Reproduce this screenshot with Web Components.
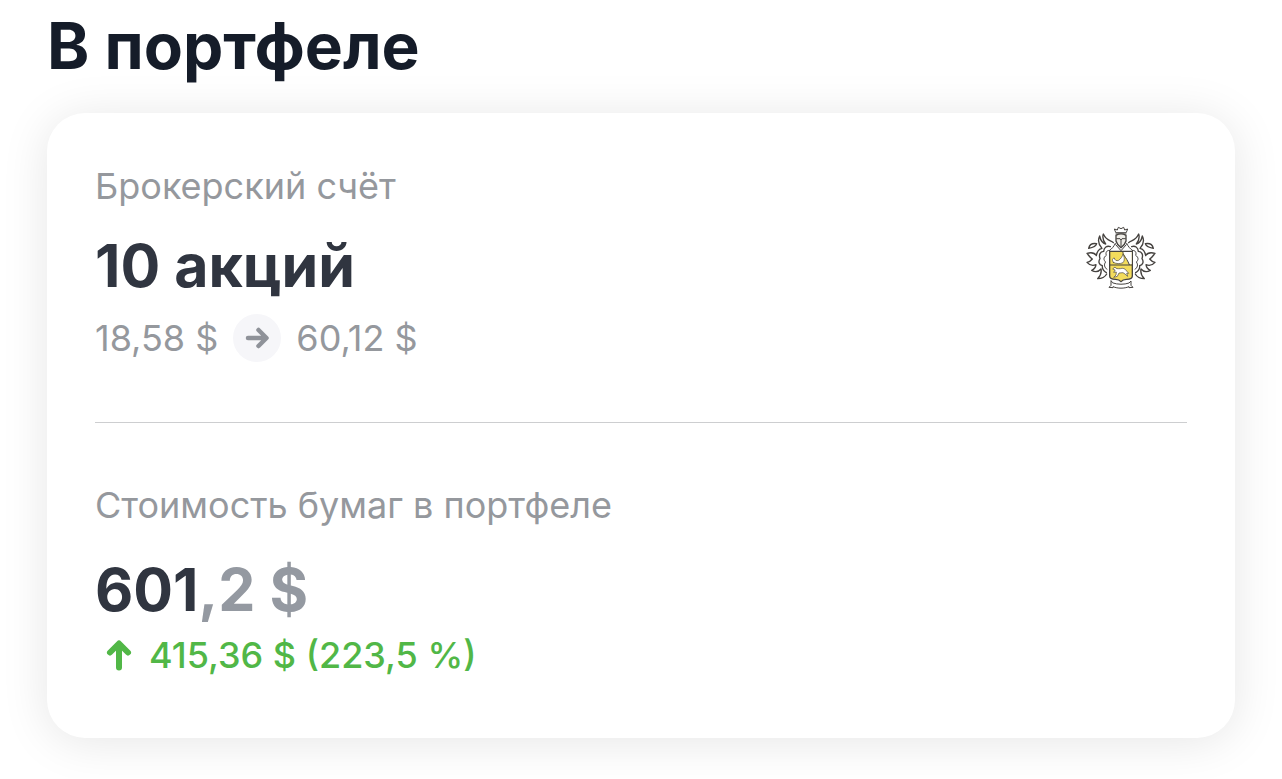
<!DOCTYPE html>
<html lang="ru">
<head>
<meta charset="utf-8">
<meta name="viewport" content="width=device-width, initial-scale=1">
<title>В портфеле</title>
<style>
    body {
        margin: 0;
        background: #fff;
        font-family: Inter, "Liberation Sans", sans-serif;
    }
</style>
</head>
<body>
<portfolio-section heading="В портфеле">
    <portfolio-card>
        <portfolio-position label="Брокерский счёт" amount="10 акций">
            <price-change from="18,58 $" to="60,12 $"></price-change>
            <broker-crest slot="logo"></broker-crest>
        </portfolio-position>
        <portfolio-value slot="total" label="Стоимость бумаг в портфеле" whole="601" fraction=",2 $" profit="415,36 $ (223,5 %)"></portfolio-value>
    </portfolio-card>
</portfolio-section>

<script>
class PortfolioSection extends HTMLElement {
    constructor() {
        super();
        this.attachShadow({ mode: 'open' });
    }

    connectedCallback() {
        this.shadowRoot.innerHTML = `
            <style>
                :host {
                    display: block;
                    padding: 6px 47px 40px;
                }
                h1 {
                    margin: 0 0 27px;
                    font-size: 64px;
                    line-height: 80px;
                    font-weight: 700;
                    color: #151c29;
                }
            </style>
            <h1>${this.getAttribute('heading')}</h1>
            <slot></slot>
        `;
    }
}

class PortfolioCard extends HTMLElement {
    constructor() {
        super();
        this.attachShadow({ mode: 'open' });
    }

    connectedCallback() {
        this.shadowRoot.innerHTML = `
            <style>
                :host {
                    display: block;
                    padding: 49px 48px 59px;
                    border-radius: 38px;
                    background: #fff;
                    box-shadow: 0 4px 48px rgba(0, 0, 0, 0.1);
                }
                hr {
                    height: 1px;
                    margin: 60px 0 58px;
                    border: 0;
                    background: #cdced0;
                }
            </style>
            <slot></slot>
            <hr>
            <slot name="total"></slot>
        `;
    }
}

class PortfolioPosition extends HTMLElement {
    constructor() {
        super();
        this.attachShadow({ mode: 'open' });
    }

    connectedCallback() {
        this.shadowRoot.innerHTML = `
            <style>
                :host {
                    display: flex;
                    align-items: center;
                    justify-content: space-between;
                }
                p {
                    margin: 0;
                }
                .label {
                    font-size: 36px;
                    line-height: 48px;
                    color: #95989d;
                }
                .amount {
                    margin: 20px 0 12px;
                    font-size: 59px;
                    line-height: 72px;
                    font-weight: 700;
                    color: #303540;
                }
            </style>
            <div>
                <p class="label">${this.getAttribute('label')}</p>
                <p class="amount">${this.getAttribute('amount')}</p>
                <slot></slot>
            </div>
            <slot name="logo"></slot>
        `;
    }
}

class PriceChange extends HTMLElement {
    constructor() {
        super();
        this.attachShadow({ mode: 'open' });
    }

    connectedCallback() {
        this.shadowRoot.innerHTML = `
            <style>
                :host {
                    display: flex;
                    align-items: center;
                    gap: 15px;
                    font-size: 36px;
                    line-height: 48px;
                    color: #95989d;
                }
                .arrow {
                    width: 48px;
                    height: 48px;
                    border-radius: 50%;
                    background: #f6f6f9;
                }
                svg {
                    display: block;
                }
            </style>
            <span>${this.getAttribute('from')}</span>
            <span class="arrow">
                <svg width="48" height="48" viewBox="0 0 48 48" fill="none" stroke="#8f9299" stroke-width="4.500" stroke-linecap="round" stroke-linejoin="round" aria-hidden="true">
                    <path d="M15 24H33M25.500 16L33.500 24L25.500 32"/>
                </svg>
            </span>
            <span>${this.getAttribute('to')}</span>
        `;
    }
}

class PortfolioValue extends HTMLElement {
    constructor() {
        super();
        this.attachShadow({ mode: 'open' });
    }

    connectedCallback() {
        this.shadowRoot.innerHTML = `
            <style>
                :host {
                    display: block;
                }
                p {
                    margin: 0;
                }
                .label {
                    font-size: 36px;
                    line-height: 48px;
                    color: #95989d;
                }
                .value {
                    margin: 25px 0 5px;
                    font-size: 59px;
                    line-height: 72px;
                    font-weight: 700;
                    color: #303540;
                }
                .fraction {
                    color: #9499a1;
                }
                .profit {
                    display: flex;
                    align-items: center;
                    gap: 6px;
                    font-size: 36px;
                    line-height: 48px;
                    font-weight: 500;
                    color: #51b747;
                }
            </style>
            <p class="label">${this.getAttribute('label')}</p>
            <p class="value">${this.getAttribute('whole')}<span class="fraction">${this.getAttribute('fraction')}</span></p>
            <p class="profit">
                <svg width="48" height="48" viewBox="0 0 48 48" fill="none" stroke="currentColor" stroke-width="6" stroke-linecap="round" stroke-linejoin="round" aria-hidden="true">
                    <path d="M24 36.500V13M15 21.500L24 12.500L33 21.500"/>
                </svg>
                <span>${this.getAttribute('profit')}</span>
            </p>
        `;
    }
}

class BrokerCrest extends HTMLElement {
    constructor() {
        super();
        this.attachShadow({ mode: 'open' });
    }

    connectedCallback() {
        this.shadowRoot.innerHTML = `
            <style>
                :host {
                    display: block;
                    flex: none;
                    margin: 0 31px 8px 0;
                }
                svg {
                    display: block;
                }
            </style>
            <svg width="70" height="64" viewBox="49 30 210 192" fill="none" stroke="#45423f" stroke-width="4" stroke-linejoin="round" stroke-linecap="round" role="img" aria-label="Тинькофф">
                <defs>
                    <g id="leaves">
                        <path d="M131 80C124 72 111 76 101 54C97 66 101 75 108 84C100 82 93 74 90 60C84 72 87 86 97 97C87 99 82 107 80 119C76 112 66 108 52 112C58 119 60 124 68 129C64 134 58 138 52 139C60 148 70 150 79 146C78 154 73 160 66 163C76 169 87 167 94 159C96 169 92 180 84 188C98 188 106 183 111 174"/>
                        <path d="M57 97C59 87 68 81 81 83C79 93 68 95 57 97Z"/>
                        <path d="M122 92C112 88 103 94 102 106C91 107 87 116 91 128C85 137 88 146 98 149C97 157 102 165 110 170"/>
                        <path d="M119 103C111 103 107 109 110 118C101 124 101 132 108 138C102 145 104 155 112 160" stroke-width="3"/>
                    </g>
                </defs>
                <use href="#leaves"/>
                <use href="#leaves" transform="matrix(-1 0 0 1 308 0)"/>
                <!-- crown and helmet -->
                <path d="M138 49L134 39L143 42L146 34L154 38L162 34L165 42L174 39L170 49ZM139 54H169" stroke-width="3"/>
                <path d="M139 58C148 53 160 53 169 58V75C167 83 162 89 154 95C146 89 141 83 139 75Z" fill="#f0eee9"/>
                <path d="M141 68H151L154 72L157 68H167M154 72V91" stroke-width="3"/>
                <path d="M137 82C133 91 127 98 119 104M171 82C175 91 181 98 189 104M138 86L154 104L170 86" stroke-width="3"/>
                <!-- shield -->
                <path d="M120 106H188V180C188 188 180 190 170 190C162 190 158 192 154 197C150 192 146 190 138 190C128 190 120 188 120 180Z" fill="#f3dc5c"/>
                <path d="M160 108H186V145H178Z" fill="#fff" stroke="none"/>
                <path d="M120 147H188M160 107C157 117 169 120 179 146" stroke-width="3"/>
                <path d="M131 139C126 132 128 127 134 126C135 132 140 136 147 133C154 128 158 121 160 114C164 122 166 133 160 140C151 144 140 144 131 139Z" fill="#fff" stroke-width="2"/>
                <path d="M130 158L136 153C138 159 145 158 152 158C159 155 167 158 171 165L177 172L171 172L174 181L166 174L160 170L148 171L143 181L132 184L139 177L140 168L132 169L136 163Z" fill="#fff" stroke-width="2"/>
                <!-- ribbon -->
                <path d="M130 201C144 206 164 206 178 201L184 195V208L190 214L178 215V212C164 218 144 218 130 212V215L118 214L124 208V195Z" fill="#fff" stroke-width="3"/>
            </svg>
        `;
    }
}

// Register the web components
customElements.define('portfolio-section', PortfolioSection);
customElements.define('portfolio-card', PortfolioCard);
customElements.define('portfolio-position', PortfolioPosition);
customElements.define('price-change', PriceChange);
customElements.define('portfolio-value', PortfolioValue);
customElements.define('broker-crest', BrokerCrest);
</script>
</body>
</html>
